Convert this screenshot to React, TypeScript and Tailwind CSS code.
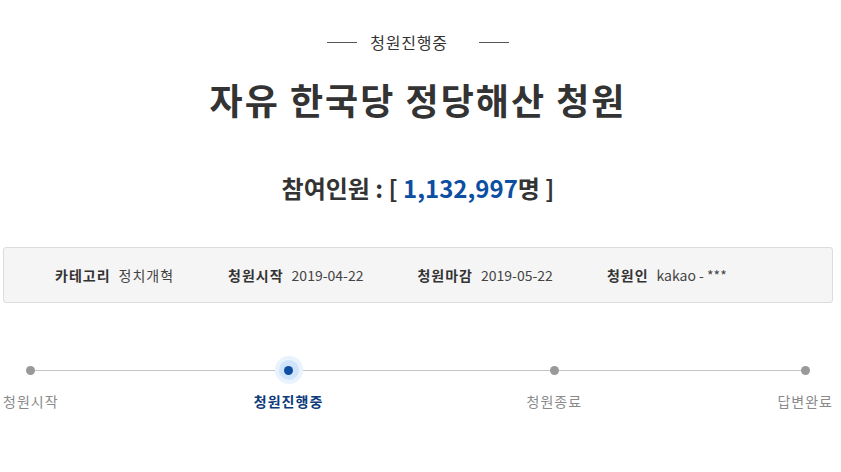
const font = { fontFamily: '"Noto Sans CJK KR", "Noto Sans", sans-serif' }

const info = [
  { label: '카테고리', value: '정치개혁', ko: true },
  { label: '청원시작', value: '2019-04-22', ko: false },
  { label: '청원마감', value: '2019-05-22', ko: false },
  { label: '청원인', value: 'kakao - ***', ko: false },
]

const steps = [
  { name: '청원시작', active: false },
  { name: '청원진행중', active: true },
  { name: '청원종료', active: false },
  { name: '답변완료', active: false },
]

export default function App() {
  return (
    <div className="min-h-screen bg-white text-[#333]" style={font}>
      <div className="ml-[3px] w-[830px]">
        <div className="flex items-center justify-center pt-[29px]">
          <span className="h-px w-[30px] bg-[#555]" />
          <span className="ml-[13px] mr-[31px] text-[16px] leading-[26px] tracking-[0.8px] text-[#333]">청원진행중</span>
          <span className="h-px w-[30px] bg-[#555]" />
        </div>

        <h1 className="mt-[19px] text-center text-[36px] font-bold leading-[50px] tracking-[2px] text-[#333]">
          자유 한국당 정당해산 청원
        </h1>

        <p className="mt-[48px] text-center text-[24px] font-bold leading-[32px] text-[#333]">
          참여인원 : [ <span className="text-[#0b4ea2]">1,132,997</span>명 ]
        </p>

        <div className="mt-[43px] flex h-[56px] items-center gap-[54px] rounded-[3px] border border-[#dcdcdc] bg-[#f5f5f5] pl-[51px] text-[14px]">
          {info.map((it) => (
            <div key={it.label} className="flex items-center gap-[8px]">
              <span className="font-bold tracking-[1px] text-[#333]">{it.label}</span>
              <span className={it.ko ? 'tracking-[1px] text-[#444]' : 'text-[#444]'}>{it.value}</span>
            </div>
          ))}
        </div>

        <div className="relative mt-[53px]">
          <div className="absolute left-[26px] right-[26px] top-[14px] h-px bg-[#c4c4c4]" />
          <div className="relative flex justify-between">
            {steps.map((s) => (
              <div key={s.name} className={s.active ? 'mr-[8px] flex flex-col items-center' : 'flex flex-col items-center'}>
                <div className="flex h-[28px] w-[28px] items-center justify-center">
                  {s.active ? (
                    <div className="flex h-[28px] w-[28px] items-center justify-center rounded-full bg-[#e9f3fd]">
                      <div className="flex h-[20px] w-[20px] items-center justify-center rounded-full bg-[#cfe4fb]">
                        <div className="h-[9px] w-[9px] rounded-full bg-[#0b4ea2]" />
                      </div>
                    </div>
                  ) : (
                    <div className="h-[9px] w-[9px] rounded-full bg-[#999]" />
                  )}
                </div>
                <span
                  className={
                    s.active
                      ? 'mt-[7px] text-[14px] font-bold tracking-[1px] text-[#0b3b7a]'
                      : 'mt-[7px] text-[14px] tracking-[1px] text-[#8a8a8a]'
                  }
                >
                  {s.name}
                </span>
              </div>
            ))}
          </div>
        </div>
      </div>
    </div>
  )
}
